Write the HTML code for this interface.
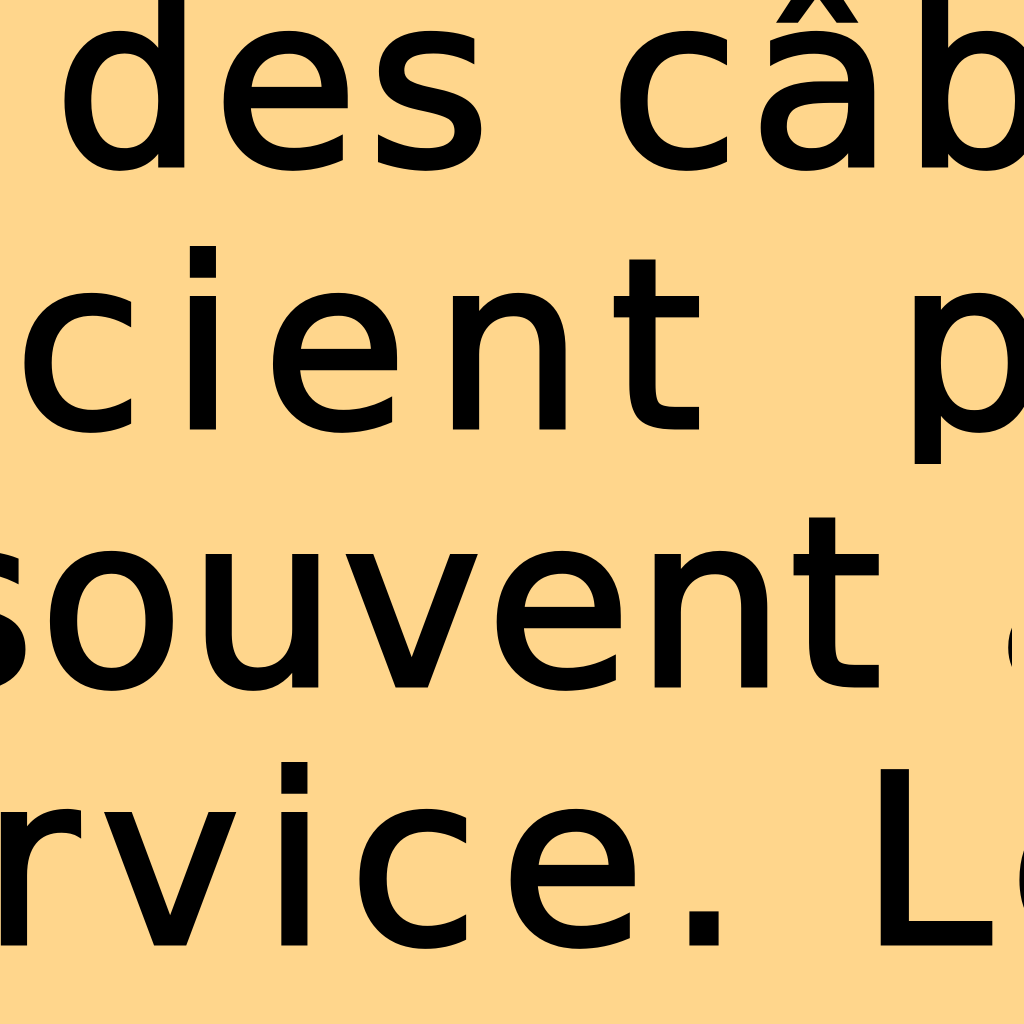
<!DOCTYPE html>
<html><head><meta charset="utf-8"><style>
html,body{margin:0;padding:0;}
body{width:1024px;height:1024px;overflow:hidden;background:#FFD68C;position:relative;}
.l{position:absolute;white-space:nowrap;font-family:"DejaVu Sans",sans-serif;font-size:235px;line-height:235px;color:#000;letter-spacing:22px;-webkit-text-stroke:5px #000;width:1100px;overflow:hidden;}
</style></head><body>
<div class="l" style="left:54px;top:-33px;letter-spacing:10px;word-spacing:25px">des câbles</div>
<div class="l" style="left:14px;top:229px;letter-spacing:27px;word-spacing:65px">cient pas</div>
<div class="l" style="left:-88px;top:487px;letter-spacing:5px;word-spacing:30px">souvent à</div>
<div class="l" style="left:-18px;top:745px">rvice. Le</div>
</body></html>
